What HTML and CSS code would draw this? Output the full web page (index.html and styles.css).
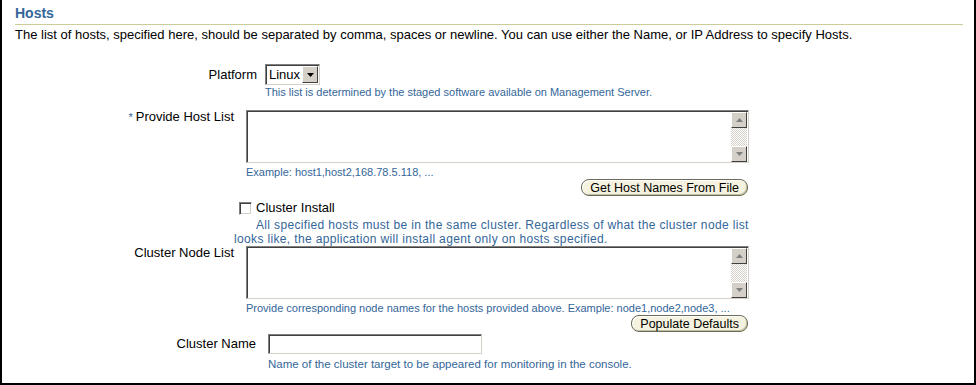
FILE: index.html
```html
<!DOCTYPE html>
<html lang="en">
<head>
    <meta charset="UTF-8">
    <title>Hosts</title>
    <link rel="stylesheet" href="styles.css">
</head>
<body>
    <div class="frame">
        <h2 class="section-title">Hosts</h2>
        <p class="intro">The list of hosts, specified here, should be separated by comma, spaces or newline. You can use either the Name, or IP Address to specify Hosts.</p>

        <div class="row row-platform">
            <label class="label">Platform</label>
            <div class="field">
                <div class="select">
                    <span class="select-value">Linux</span>
                    <span class="select-arrow">
                        <svg width="7" height="4" viewBox="0 0 7 4"><polygon points="0,0 7,0 3.5,4" fill="#000"/></svg>
                    </span>
                </div>
                <div class="hint">This list is determined by the staged software available on Management Server.</div>
            </div>
        </div>

        <div class="row row-hosts">
            <label class="label"><span class="required">*</span>Provide Host List</label>
            <div class="field field-wide">
                <div class="textbox">
                    <textarea></textarea>
                    <div class="scrollbar">
                        <span class="scroll-btn"><svg width="7" height="4" viewBox="0 0 7 4"><polygon points="3.5,0 7,4 0,4" fill="#808080"/></svg></span>
                        <span class="scroll-track"></span>
                        <span class="scroll-btn"><svg width="7" height="4" viewBox="0 0 7 4"><polygon points="0,0 7,0 3.5,4" fill="#808080"/></svg></span>
                    </div>
                </div>
                <div class="hint">Example: host1,host2,168.78.5.118, ...</div>
                <div class="actions"><button class="btn">Get Host Names From File</button></div>
            </div>
        </div>

        <div class="cluster-install">
            <div class="check-line">
                <span class="checkbox"></span>
                <span>Cluster Install</span>
            </div>
            <div class="hint hint-indent">All specified hosts must be in the same cluster. Regardless of what the cluster node list looks like, the application will install agent only on hosts specified.</div>
        </div>

        <div class="row row-nodes">
            <label class="label">Cluster Node List</label>
            <div class="field field-wide">
                <div class="textbox">
                    <textarea></textarea>
                    <div class="scrollbar">
                        <span class="scroll-btn"><svg width="7" height="4" viewBox="0 0 7 4"><polygon points="3.5,0 7,4 0,4" fill="#808080"/></svg></span>
                        <span class="scroll-track"></span>
                        <span class="scroll-btn"><svg width="7" height="4" viewBox="0 0 7 4"><polygon points="0,0 7,0 3.5,4" fill="#808080"/></svg></span>
                    </div>
                </div>
                <div class="hint">Provide corresponding node names for the hosts provided above. Example: node1,node2,node3, ...</div>
                <div class="actions"><button class="btn">Populate Defaults</button></div>
            </div>
        </div>

        <div class="row row-name">
            <label class="label">Cluster Name</label>
            <div class="field">
                <input class="text-input" type="text">
                <div class="hint">Name of the cluster target to be appeared for monitoring in the console.</div>
            </div>
        </div>
    </div>
</body>
</html>
```

FILE: styles.css
```css
* {
    margin: 0;
    padding: 0;
    box-sizing: border-box;
}

body {
    font-family: 'Liberation Sans', Arial, sans-serif;
    font-size: 13px;
    color: #000;
    background: #fff;
}

.frame {
    width: 976px;
    height: 385px;
    border: 2px solid #000;
    border-top: none;
    padding: 5px 11px 0 13px;
}

.section-title {
    font-size: 14px;
    line-height: 16px;
    font-weight: bold;
    color: #336699;
    padding-bottom: 3px;
    border-bottom: 1px solid #cccc99;
}

.intro {
    line-height: 14px;
    margin-top: 3px;
}

.row {
    display: flex;
    align-items: flex-start;
}

.label {
    flex-shrink: 0;
    text-align: right;
    line-height: 14px;
    padding-right: 12px;
}

.hint {
    font-size: 11px;
    line-height: 14px;
    color: #336699;
}

.required {
    color: #336699;
    font-size: 11px;
    margin-right: 3px;
}

/* platform */
.row-platform {
    margin-top: 22px;
}

.row-platform .label {
    width: 250px;
    padding-right: 8px;
    line-height: 21px;
}

.select {
    display: inline-flex;
    width: 55px;
    height: 21px;
    border-top: 1px solid #808080;
    border-left: 1px solid #808080;
    border-bottom: 1px solid #d4d0c8;
    border-right: 1px solid #d4d0c8;
    box-shadow: inset 1px 1px 0 #404040;
    background: #fff;
}

.select-value {
    flex: 1;
    font-size: 13px;
    line-height: 19px;
    padding-left: 3px;
}

.select-arrow {
    width: 16px;
    margin: 1px 1px 1px 0;
    background: #d4d0c8;
    border-top: 1px solid #fff;
    border-left: 1px solid #fff;
    border-bottom: 1px solid #404040;
    border-right: 1px solid #404040;
    display: flex;
    align-items: center;
    justify-content: center;
}

/* host list + node list */
.row-hosts {
    margin-top: 11px;
}

.row-hosts .label,
.row-nodes .label {
    width: 231px;
}

.field-wide {
    width: 503px;
}

.textbox {
    display: flex;
    height: 53px;
    border-top: 1px solid #808080;
    border-left: 1px solid #808080;
    border-bottom: 1px solid #d4d0c8;
    border-right: 1px solid #d4d0c8;
    box-shadow: inset 1px 1px 0 #404040;
    padding: 1px 1px 0 1px;
    background: #fff;
}

.textbox textarea {
    flex: 1;
    border: none;
    resize: none;
    outline: none;
    font-family: 'Liberation Mono', monospace;
    font-size: 12px;
}

.scrollbar {
    width: 16px;
    display: flex;
    flex-direction: column;
}

.scroll-btn {
    height: 16px;
    background: #d4d0c8;
    border-top: 1px solid #fff;
    border-left: 1px solid #fff;
    border-bottom: 1px solid #404040;
    border-right: 1px solid #404040;
    display: flex;
    align-items: center;
    justify-content: center;
}

.scroll-track {
    flex: 1;
    background-color: #fff;
    background-image: repeating-conic-gradient(#d4d0c8 0 25%, #fff 0 50%);
    background-size: 2px 2px;
}

.textbox + .hint {
    margin-top: 2px;
}

.actions {
    text-align: right;
    padding-right: 1px;
}

.btn {
    font-family: 'Liberation Sans', Arial, sans-serif;
    font-size: 12.5px;
    line-height: 14px;
    color: #000;
    padding: 0 8px;
    height: 17px;
    border: 1px solid #6b6b5c;
    border-radius: 8px;
    background: #f5f3df;
    box-shadow: inset 1px 1px 0 #fff, inset -1px -1px 0 #c2bea0;
}

/* cluster install */
.cluster-install {
    margin-left: 219px;
    width: 525px;
    margin-top: 4px;
}

.check-line {
    display: flex;
    align-items: center;
    height: 16px;
    line-height: 16px;
    padding-left: 5px;
    gap: 4px;
}

.checkbox {
    width: 13px;
    height: 13px;
    border-top: 1px solid #808080;
    border-left: 1px solid #808080;
    border-bottom: 1px solid #fff;
    border-right: 1px solid #fff;
    box-shadow: inset 1px 1px 0 #404040, inset -1px -1px 0 #d4d0c8;
    background: #fff;
}

.hint-indent {
    font-size: 12px;
    letter-spacing: 0.35px;
    text-indent: 22px;
    margin-top: 2px;
}

/* cluster name */
.row-name {
    margin-top: 2px;
}

.row-name .label {
    width: 253px;
    line-height: 20px;
}

.text-input {
    display: block;
    width: 214px;
    height: 20px;
    border-top: 1px solid #808080;
    border-left: 1px solid #808080;
    border-bottom: 1px solid #d4d0c8;
    border-right: 1px solid #d4d0c8;
    box-shadow: inset 1px 1px 0 #404040;
    outline: none;
}

.row-name .hint {
    font-size: 11.5px;
    margin-top: 3px;
}
```
